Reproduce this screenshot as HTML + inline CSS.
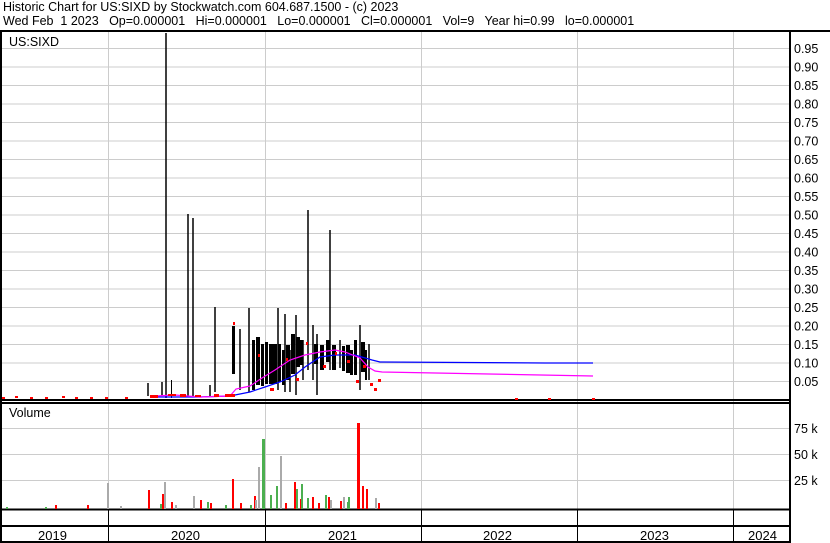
<!DOCTYPE html>
<html><head><meta charset="utf-8"><style>
body{margin:0;background:#fff;width:830px;height:543px;overflow:hidden;font-family:"Liberation Sans",Arial,sans-serif}
.t{position:absolute;left:3px;font-size:12.5px;line-height:15px;color:#000;white-space:pre}
</style></head><body>
<div class="t" style="top:0">Historic Chart for US:SIXD by Stockwatch.com 604.687.1500 - (c) 2023</div>
<div class="t" style="top:14px">Wed Feb  1 2023   Op=0.000001   Hi=0.000001   Lo=0.000001   Cl=0.000001   Vol=9   Year hi=0.99   lo=0.000001</div>
<svg width="830" height="543" style="position:absolute;left:0;top:0" font-family="Liberation Sans,Arial,sans-serif" font-size="12.5">
<g stroke="#ccc" stroke-width="1">
<line x1="108.5" y1="32" x2="108.5" y2="509"/><line x1="265.5" y1="32" x2="265.5" y2="509"/><line x1="421.5" y1="32" x2="421.5" y2="509"/><line x1="577.5" y1="32" x2="577.5" y2="509"/><line x1="733.5" y1="32" x2="733.5" y2="509"/>
<line x1="0" y1="48.5" x2="789" y2="48.5"/><line x1="0" y1="67" x2="789" y2="67"/><line x1="0" y1="85.5" x2="789" y2="85.5"/><line x1="0" y1="104" x2="789" y2="104"/><line x1="0" y1="122.5" x2="789" y2="122.5"/><line x1="0" y1="141" x2="789" y2="141"/><line x1="0" y1="159.5" x2="789" y2="159.5"/><line x1="0" y1="178" x2="789" y2="178"/><line x1="0" y1="196.5" x2="789" y2="196.5"/><line x1="0" y1="215" x2="789" y2="215"/><line x1="0" y1="233.5" x2="789" y2="233.5"/><line x1="0" y1="252" x2="789" y2="252"/><line x1="0" y1="270.5" x2="789" y2="270.5"/><line x1="0" y1="289" x2="789" y2="289"/><line x1="0" y1="307.5" x2="789" y2="307.5"/><line x1="0" y1="326" x2="789" y2="326"/><line x1="0" y1="344.5" x2="789" y2="344.5"/><line x1="0" y1="363" x2="789" y2="363"/><line x1="0" y1="381.5" x2="789" y2="381.5"/>
<line x1="0" y1="428.5" x2="789" y2="428.5"/><line x1="0" y1="454.5" x2="789" y2="454.5"/><line x1="0" y1="480.5" x2="789" y2="480.5"/>
</g>
<g stroke="#000" stroke-width="2" fill="none">
<line x1="0" y1="31" x2="830" y2="31"/>
<line x1="1" y1="31" x2="1" y2="543"/>
<line x1="790" y1="31" x2="790" y2="543"/>
<line x1="0" y1="400" x2="790" y2="400"/>
<line x1="0" y1="403" x2="790" y2="403"/>
<line x1="0" y1="509.5" x2="790" y2="509.5"/>
<line x1="0" y1="526" x2="790" y2="526"/>
<line x1="0" y1="542" x2="790" y2="542"/>
</g>
<g stroke="#000" stroke-width="1">
<line x1="108.5" y1="510" x2="108.5" y2="542"/><line x1="265.5" y1="510" x2="265.5" y2="542"/><line x1="421.5" y1="510" x2="421.5" y2="542"/><line x1="577.5" y1="510" x2="577.5" y2="542"/><line x1="733.5" y1="510" x2="733.5" y2="542"/>
</g>
<text x="9" y="46">US:SIXD</text>
<text x="9" y="417">Volume</text>
<g font-size="13">
<text x="38" y="540">2019</text><text x="171" y="540">2020</text><text x="328" y="540">2021</text><text x="483" y="540">2022</text><text x="640" y="540">2023</text><text x="748" y="540">2024</text>
</g>
<g font-size="12.5">
<text x="794" y="53">0.95</text><text x="794" y="71.5">0.90</text><text x="794" y="90">0.85</text><text x="794" y="108.5">0.80</text><text x="794" y="127">0.75</text><text x="794" y="145.5">0.70</text><text x="794" y="164">0.65</text><text x="794" y="182.5">0.60</text><text x="794" y="201">0.55</text><text x="794" y="219.5">0.50</text><text x="794" y="238">0.45</text><text x="794" y="256.5">0.40</text><text x="794" y="275">0.35</text><text x="794" y="293.5">0.30</text><text x="794" y="312">0.25</text><text x="794" y="330.5">0.20</text><text x="794" y="349">0.15</text><text x="794" y="367.5">0.10</text><text x="794" y="386">0.05</text>
<text x="794" y="433">75 k</text><text x="794" y="459">50 k</text><text x="794" y="485">25 k</text>
</g>
<g stroke="#000" stroke-width="1.5">
<line x1="166" y1="33" x2="166" y2="398"/>
<line x1="188" y1="214" x2="188" y2="397"/>
<line x1="193" y1="218" x2="193" y2="397"/>
<line x1="148" y1="383" x2="148" y2="396"/><line x1="162" y1="382" x2="162" y2="396"/>
<line x1="215" y1="307" x2="215" y2="392"/><line x1="210" y1="385" x2="210" y2="396"/>
<line x1="249" y1="308" x2="249" y2="392"/><line x1="240" y1="329" x2="240" y2="390"/>
<line x1="278" y1="308" x2="278" y2="390"/><line x1="285" y1="314" x2="285" y2="392"/>
<line x1="296" y1="315" x2="296" y2="395"/><line x1="308" y1="210" x2="308" y2="370"/>
<line x1="330" y1="230" x2="330" y2="370"/><line x1="317" y1="334" x2="317" y2="395"/>
<line x1="313" y1="325" x2="313" y2="380"/><line x1="360" y1="325" x2="360" y2="390"/>
<line x1="369" y1="344" x2="369" y2="380"/><line x1="303" y1="340" x2="303" y2="380"/>
<line x1="290" y1="350" x2="290" y2="392"/><line x1="340" y1="340" x2="340" y2="368"/>
</g>
<g fill="#000">
<rect x="232" y="326" width="3" height="48"/>
<rect x="252" y="340" width="3" height="50"/><rect x="256" y="337" width="4" height="48"/>
<rect x="261" y="344" width="3" height="42"/><rect x="265" y="342" width="3" height="42"/>
<rect x="269" y="344" width="4" height="40"/><rect x="273" y="344" width="4" height="40"/>
<rect x="278" y="344" width="3" height="38"/><rect x="282" y="350" width="3" height="35"/>
<rect x="286" y="345" width="4" height="35"/><rect x="291" y="334" width="4" height="40"/>
<rect x="296" y="337" width="4" height="30"/><rect x="300" y="340" width="3" height="25"/>
<rect x="314" y="344" width="4" height="20"/><rect x="320" y="345" width="4" height="25"/>
<rect x="326" y="340" width="4" height="22"/><rect x="332" y="345" width="4" height="25"/>
<rect x="342" y="346" width="3" height="25"/><rect x="346" y="345" width="4" height="28"/>
<rect x="350" y="350" width="3" height="25"/><rect x="354" y="340" width="3" height="35"/>
<rect x="361" y="342" width="4" height="30"/><rect x="365" y="350" width="2" height="30"/>
<rect x="171" y="380" width="1" height="18"/>
</g>
<polyline fill="none" stroke="#0000ff" stroke-width="1.2" points="150,397 200,397 230,396 250,392 265,387 280,382 295,375 305,367 320,357 335,355 355,355 372,360 380,362 545,363 593,363"/>
<polyline fill="none" stroke="#ff00ff" stroke-width="1.2" points="155,396 175,395 200,397 230,396 236,389 250,386 262,378 275,370 290,360 305,355 320,352 335,350 345,352 360,358 368,367 375,371 382,372 593,376"/>
<g fill="#f00">
<rect x="2" y="397" width="3" height="2"/><rect x="15" y="396" width="3" height="2"/><rect x="30" y="397" width="3" height="2"/><rect x="45" y="397" width="3" height="2"/><rect x="62" y="396" width="3" height="2"/><rect x="75" y="397" width="3" height="2"/><rect x="90" y="397" width="3" height="2"/><rect x="105" y="397" width="3" height="2"/><rect x="125" y="397" width="3" height="2"/>
<rect x="150" y="395" width="8" height="3"/><rect x="168" y="394" width="8" height="2"/><rect x="180" y="394" width="6" height="3"/><rect x="195" y="395" width="6" height="2"/><rect x="214" y="394" width="5" height="3"/><rect x="225" y="394" width="10" height="3"/>
<rect x="270" y="388" width="4" height="3"/><rect x="296" y="378" width="3" height="3"/><rect x="323" y="365" width="3" height="3"/><rect x="347" y="360" width="3" height="3"/><rect x="356" y="380" width="3" height="3"/><rect x="363" y="365" width="3" height="3"/><rect x="370" y="383" width="3" height="3"/><rect x="374" y="388" width="3" height="3"/><rect x="378" y="379" width="3" height="3"/><rect x="515" y="398" width="3" height="2"/><rect x="548" y="398" width="3" height="2"/><rect x="592" y="398" width="3" height="2"/>
<rect x="233" y="322" width="2" height="3"/><rect x="258" y="354" width="2" height="3"/><rect x="286" y="358" width="2" height="3"/><rect x="306" y="342" width="2" height="3"/><rect x="335" y="352" width="2" height="3"/>
</g>
<g fill="#f00">
<rect x="148" y="490" width="2" height="19"/><rect x="162" y="494" width="2" height="15"/><rect x="171" y="502" width="2" height="7"/><rect x="232" y="479" width="2" height="30"/><rect x="254" y="496" width="2" height="13"/><rect x="262" y="495" width="2" height="14"/><rect x="294" y="482" width="2" height="27"/><rect x="328" y="497" width="2" height="12"/><rect x="357" y="423" width="3" height="86"/><rect x="362" y="486" width="2" height="23"/><rect x="366" y="489" width="2" height="20"/><rect x="300" y="499" width="2" height="10"/><rect x="312" y="497" width="2" height="12"/><rect x="240" y="503" width="2" height="6"/><rect x="200" y="500" width="2" height="9"/><rect x="210" y="503" width="2" height="6"/><rect x="285" y="503" width="2" height="6"/><rect x="318" y="503" width="2" height="6"/><rect x="340" y="501" width="2" height="8"/><rect x="378" y="503" width="2" height="6"/><rect x="55" y="505" width="2" height="4"/><rect x="87" y="505" width="2" height="4"/>
</g>
<g fill="#4caf50">
<rect x="262" y="439" width="3" height="70"/><rect x="276" y="486" width="2" height="23"/><rect x="280" y="490" width="2" height="19"/><rect x="296" y="489" width="2" height="20"/><rect x="301" y="484" width="2" height="25"/><rect x="307" y="498" width="2" height="11"/><rect x="325" y="495" width="2" height="14"/><rect x="348" y="497" width="2" height="12"/><rect x="347" y="502" width="2" height="7"/><rect x="160" y="504" width="2" height="5"/><rect x="207" y="502" width="2" height="7"/><rect x="225" y="505" width="2" height="4"/><rect x="250" y="505" width="2" height="4"/><rect x="270" y="495" width="2" height="14"/><rect x="6" y="507" width="2" height="2"/><rect x="45" y="507" width="2" height="2"/>
</g>
<g fill="#aaa">
<rect x="107" y="483" width="2" height="26"/><rect x="164" y="482" width="2" height="27"/><rect x="258" y="467" width="2" height="42"/><rect x="280" y="456" width="2" height="53"/><rect x="193" y="496" width="2" height="13"/><rect x="175" y="505" width="2" height="4"/><rect x="343" y="497" width="2" height="12"/><rect x="330" y="500" width="2" height="9"/><rect x="375" y="498" width="2" height="11"/><rect x="255" y="500" width="2" height="9"/><rect x="120" y="506" width="2" height="3"/>
</g>
</svg>
</body></html>
